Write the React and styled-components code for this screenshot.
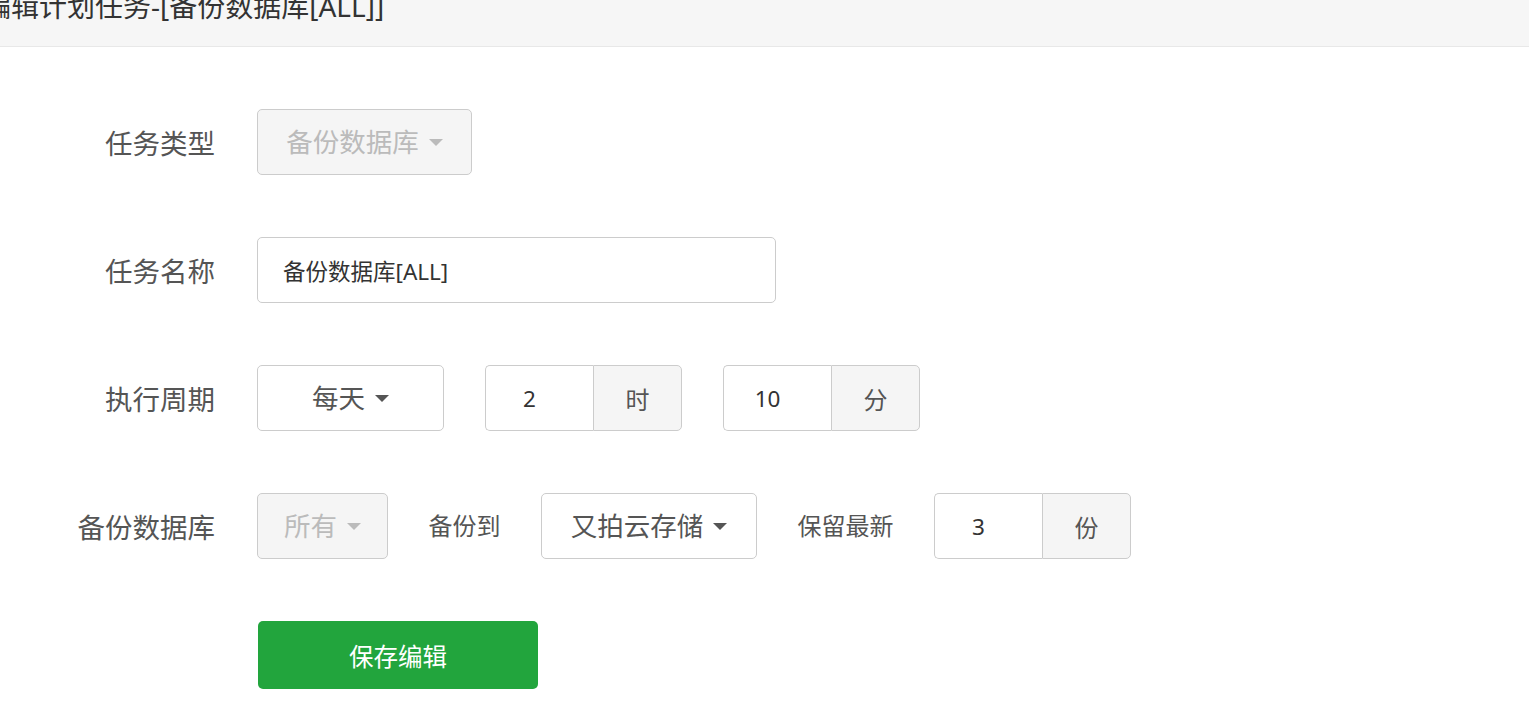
import React from "react";
import styled, { createGlobalStyle } from "styled-components";

const GlobalStyle = createGlobalStyle`
  html, body {
    margin: 0;
    padding: 0;
    background: #fff;
    overflow: hidden;
  }
  body {
    font-family: "Noto Sans", "Noto Sans CJK SC", sans-serif;
  }
  * {
    box-sizing: border-box;
  }
`;

function EditTaskPage() {
  return (
    <Dialog>
      <GlobalStyle />
      <Header>编辑计划任务-[备份数据库[ALL]]</Header>
      <Form>
        <Row>
          <Label>任务类型</Label>
          <Select disabled width={215}>
            备份数据库
            <Caret disabled />
          </Select>
        </Row>
        <Row>
          <Label>任务名称</Label>
          <TextInput value="备份数据库[ALL]" readOnly />
        </Row>
        <Row>
          <Label>执行周期</Label>
          <Controls gap={41}>
            <Select width={187}>
              每天
              <Caret />
            </Select>
            <InputGroup>
              <GroupInput value="2" readOnly />
              <Addon>时</Addon>
            </InputGroup>
            <InputGroup>
              <GroupInput value="10" readOnly />
              <Addon>分</Addon>
            </InputGroup>
          </Controls>
        </Row>
        <Row>
          <Label>备份数据库</Label>
          <Controls gap={40.5}>
            <Select disabled width={131}>
              所有
              <Caret disabled />
            </Select>
            <InlineLabel>备份到</InlineLabel>
            <Select width={216}>
              又拍云存储
              <Caret />
            </Select>
            <InlineLabel>保留最新</InlineLabel>
            <InputGroup>
              <GroupInput value="3" readOnly />
              <Addon>份</Addon>
            </InputGroup>
          </Controls>
        </Row>
        <SaveButton>保存编辑</SaveButton>
      </Form>
    </Dialog>
  );
}

const Dialog = styled.div`
  margin: -33px 0 0 -37px;
  width: calc(100% + 37px);
`;

const Header = styled.div`
  height: 80px;
  line-height: 79px;
  padding-left: 20px;
  background: #f6f6f6;
  border-bottom: 1px solid #e8e8e8;
  font-size: 28px;
  color: #333;
  white-space: nowrap;
`;

const Form = styled.div`
  padding-top: 62px;
`;

const Row = styled.div`
  display: flex;
  align-items: center;
  height: 66px;
  margin-bottom: 62px;
`;

const Label = styled.div`
  width: 252px;
  margin-right: 42px;
  padding-top: 3px;
  text-align: right;
  font-size: 27.5px;
  color: #555;
  line-height: 1;
`;

const Controls = styled.div`
  display: flex;
  align-items: center;
  gap: ${(p) => p.gap}px;
`;

const Select = styled.div`
  display: inline-flex;
  align-items: center;
  justify-content: center;
  width: ${(p) => p.width}px;
  height: 66px;
  border: 1px solid #ccc;
  border-radius: 5px;
  background: ${(p) => (p.disabled ? "#f5f5f5" : "#fff")};
  color: ${(p) => (p.disabled ? "#bbb" : "#555")};
  font-size: 26.5px;
  line-height: 1;
  white-space: nowrap;
`;

const Caret = styled.span`
  display: inline-block;
  margin-left: 10px;
  width: 0;
  height: 0;
  border-left: 7px solid transparent;
  border-right: 7px solid transparent;
  border-top: 7px solid ${(p) => (p.disabled ? "#bbb" : "#555")};
`;

const TextInput = styled.input`
  width: 519px;
  height: 66px;
  border: 1px solid #ccc;
  border-radius: 5px;
  padding: 0 25px;
  font-family: inherit;
  font-size: 22.5px;
  color: #333;
  outline: none;
`;

const InputGroup = styled.div`
  display: flex;
  height: 66px;
`;

const GroupInput = styled.input`
  width: 108px;
  height: 66px;
  border: 1px solid #ccc;
  border-right: none;
  border-radius: 5px 0 0 5px;
  padding: 0 26px 0 6px;
  text-align: center;
  font-family: inherit;
  font-size: 22.5px;
  color: #333;
  outline: none;
`;

const Addon = styled.div`
  display: flex;
  align-items: center;
  justify-content: center;
  width: 89px;
  height: 66px;
  border: 1px solid #ccc;
  border-radius: 0 5px 5px 0;
  background: #f5f5f5;
  font-size: 24px;
  color: #555;
`;

const InlineLabel = styled.div`
  font-size: 24px;
  color: #555;
  line-height: 1;
  white-space: nowrap;
`;

const SaveButton = styled.button`
  display: block;
  margin-left: 295px;
  width: 280px;
  height: 68px;
  border: none;
  border-radius: 5px;
  background: #22a53d;
  color: #fff;
  font-family: inherit;
  font-size: 24.5px;
  cursor: pointer;
`;

export default EditTaskPage;
